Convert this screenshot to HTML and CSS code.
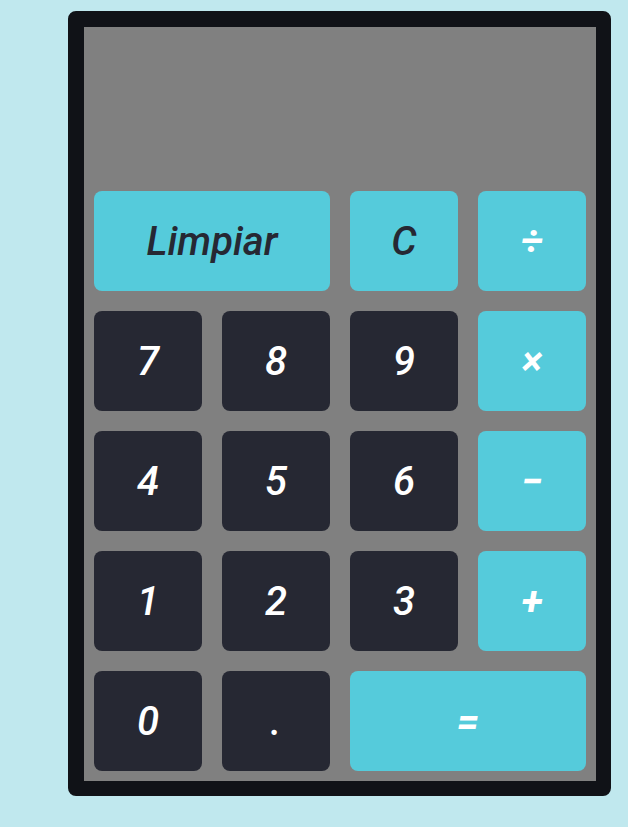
FILE: index.html
```html
<!DOCTYPE html>
<html lang="es">
<head>
<meta charset="utf-8">
<title>Calculadora</title>
<link rel="stylesheet" href="styles.css">
</head>
<body>
<div class="calc">
  <div class="screen"></div>
  <div class="keys">
    <button class="key op wide dark-text">Limpiar</button>
    <button class="key op dark-text">C</button>
    <button class="key op sym">÷</button>
    <button class="key num">7</button>
    <button class="key num">8</button>
    <button class="key num">9</button>
    <button class="key op sym">×</button>
    <button class="key num">4</button>
    <button class="key num">5</button>
    <button class="key num">6</button>
    <button class="key op sym">−</button>
    <button class="key num">1</button>
    <button class="key num">2</button>
    <button class="key num">3</button>
    <button class="key op sym">+</button>
    <button class="key num">0</button>
    <button class="key num">.</button>
    <button class="key op sym wide">=</button>
  </div>
</div>
</body>
</html>
```
FILE: styles.css
```css
html, body {
  margin: 0;
  padding: 0;
  background: #c0e8ee;
  font-family: Roboto, "Noto Sans", sans-serif;
}
body {
  padding: 11px 0 0 68px;
}
.calc {
  width: 512px;
  background: #808080;
  border-style: solid;
  border-color: #101217;
  border-width: 16px 15px 15px 16px;
  border-radius: 8px;
}
.screen {
  height: 154px;
}
.keys {
  display: grid;
  grid-template-columns: repeat(4, 108px);
  grid-auto-rows: 100px;
  gap: 20px;
  padding: 10px;
}
.key {
  border: none;
  border-radius: 8px;
  font-family: Roboto, "Noto Sans", sans-serif;
  font-style: italic;
  font-weight: 500;
  font-size: 40px;
  padding: 0;
  display: flex;
  align-items: center;
  justify-content: center;
}
.wide {
  grid-column: span 2;
}
.num {
  background: #262833;
  color: #ffffff;
}
.op {
  background: #55cbdb;
  color: #ffffff;
}
.dark-text {
  color: #262833;
}
.sym {
  font-weight: 700;
}
```
